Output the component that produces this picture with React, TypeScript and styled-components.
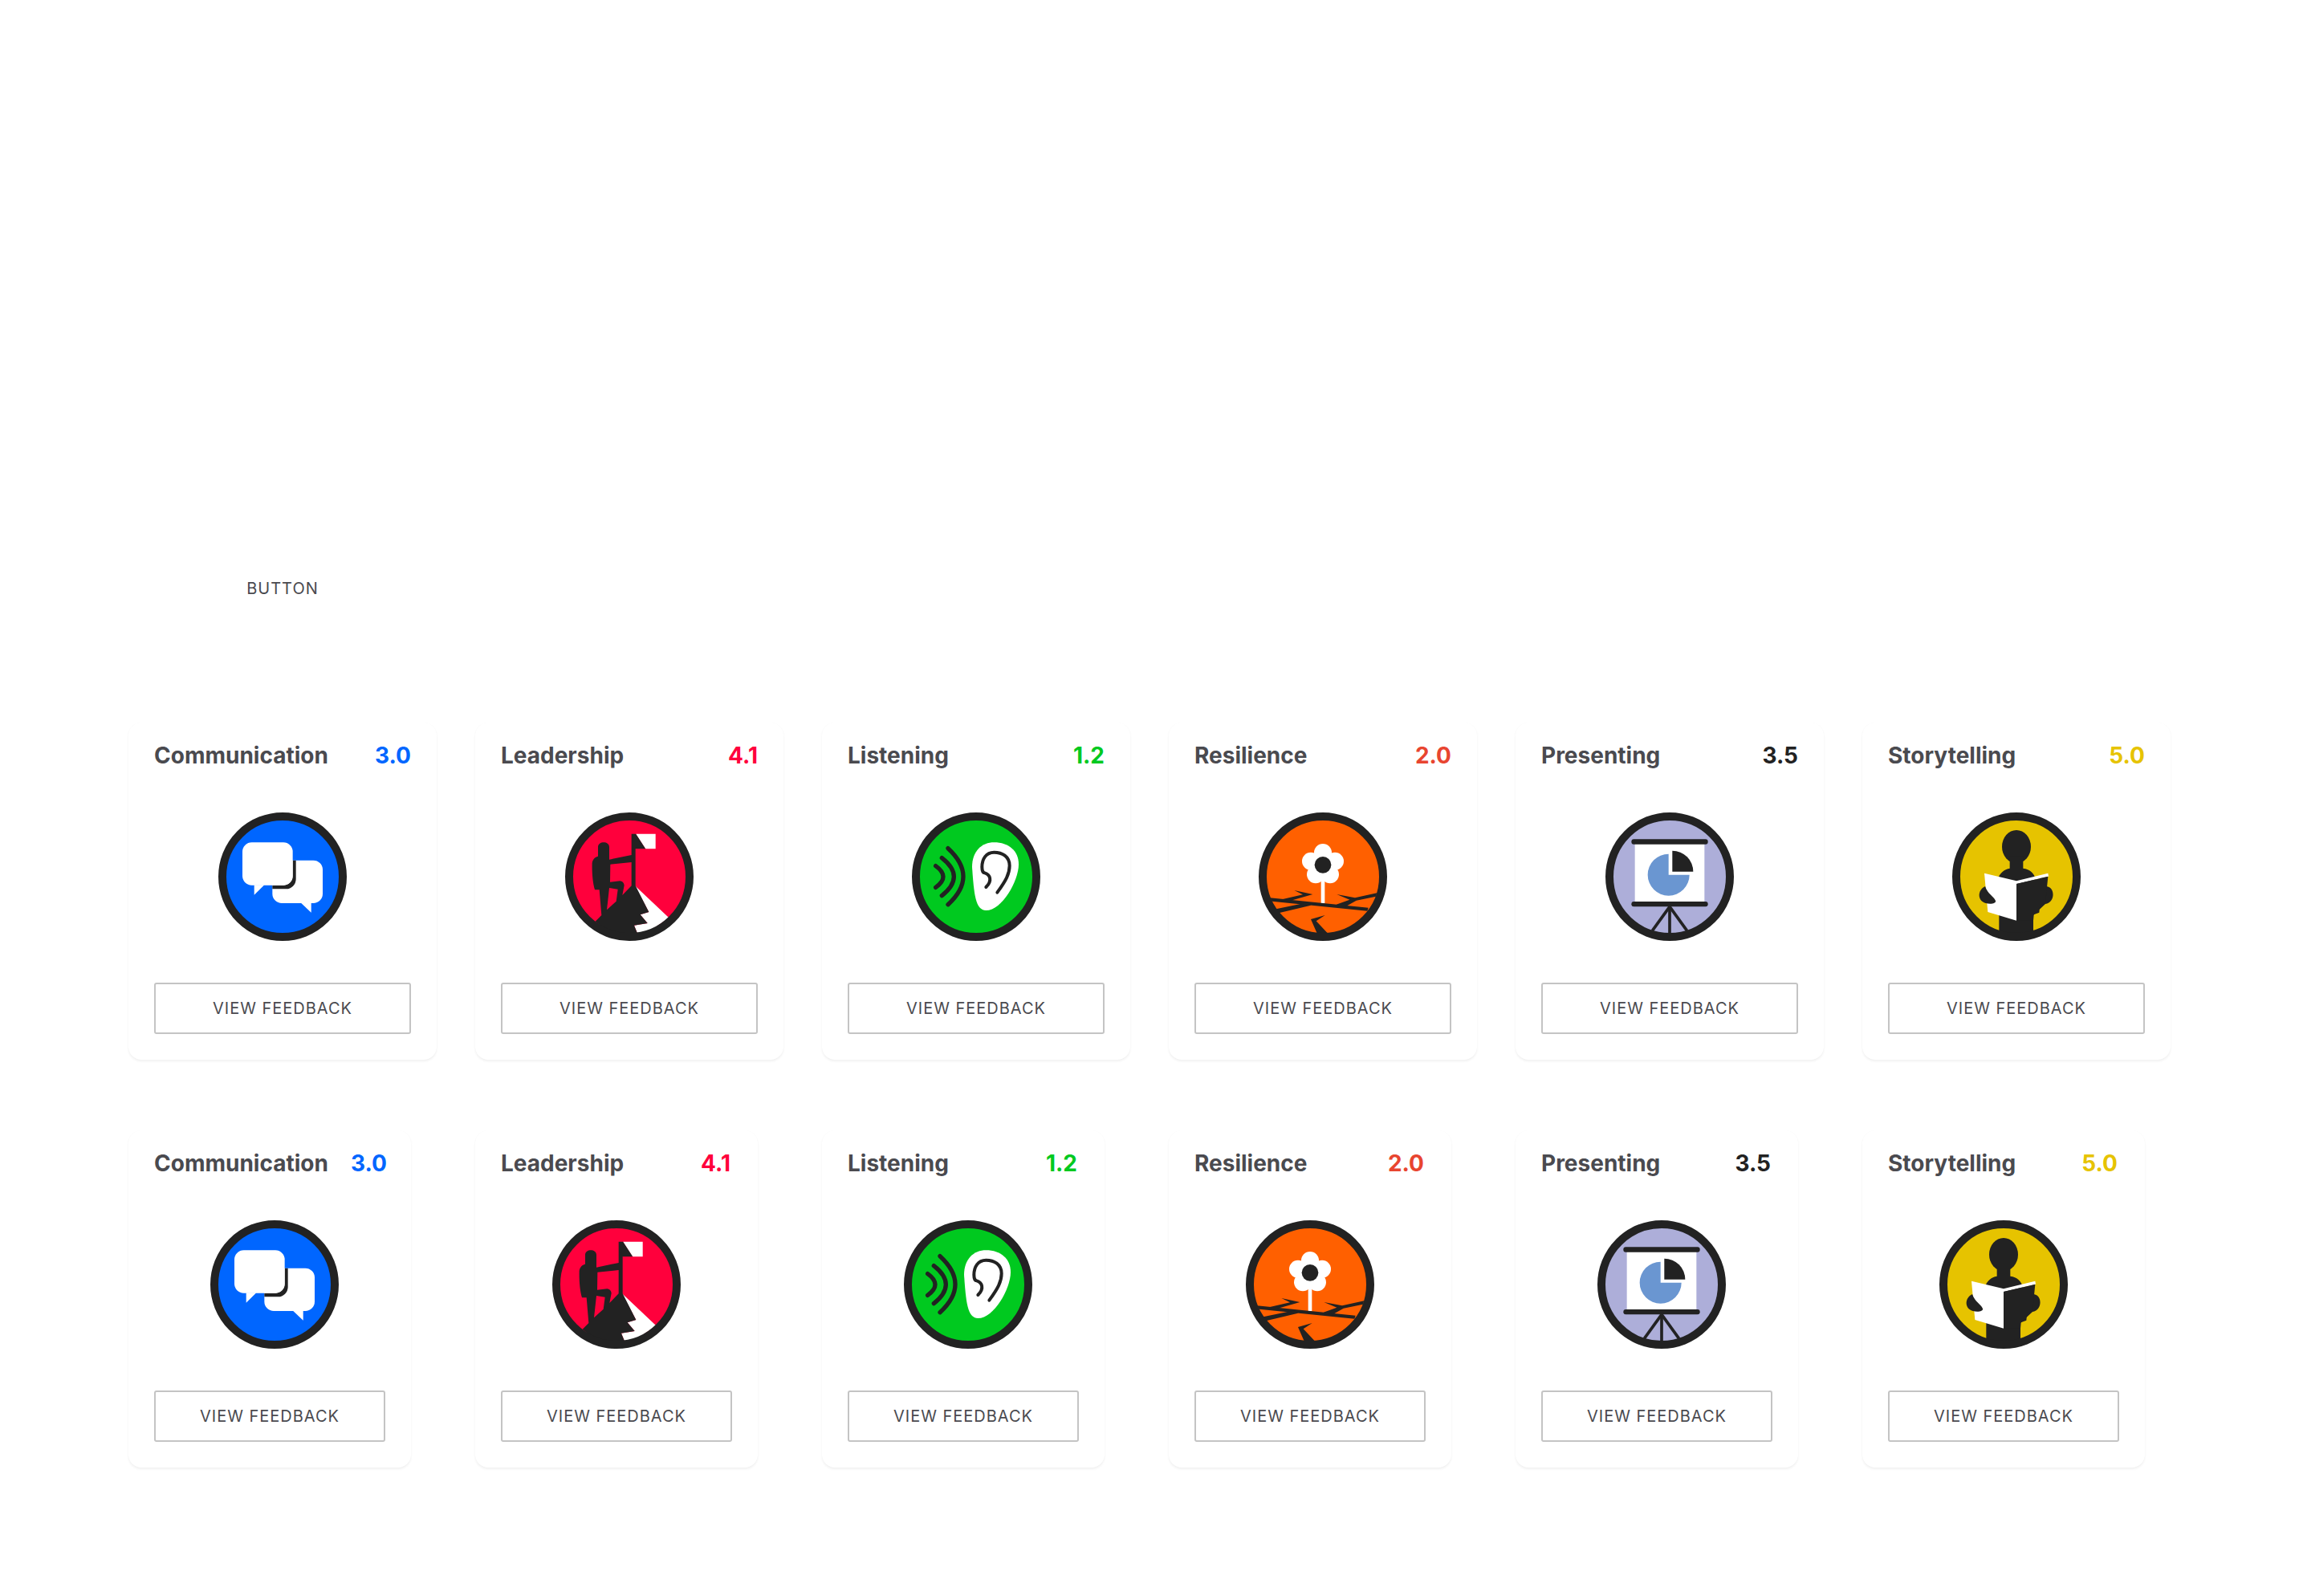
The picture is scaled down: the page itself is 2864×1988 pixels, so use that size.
import React from 'react'
import styled, { createGlobalStyle } from 'styled-components';

const ink = '#222222';

const GlobalStyle = createGlobalStyle`
    html, body {
        margin: 0;
        background: #ffffff;
        font-family: Inter, "Liberation Sans", sans-serif;
    }
`;

const ChatArt = () => (
    <>
        <rect x={238} y={215} width={188} height={160} rx={35} fill="#fff" />
        <path d="M345 374 L383 410 V374 Z" fill="#fff" />
        <path d="M314 215 H326 V285 A37 37 0 0 1 289 322 H238 V308 H280 A34 34 0 0 0 314 274 Z" fill={ink} />
        <rect x={126} y={148} width={188} height={160} rx={35} fill="#fff" />
        <path d="M170 307 V344 L208 307 Z" fill="#fff" />
    </>
);

const ClimberArt = () => (
    <>
        <path d="M288 310 L415 430 L350 475 L298 490 L285 458 L335 450 L308 418 L340 408 Z" fill="#fff" />
        <path d="M140 443 L163 420 L155 325 L138 325 C130 300 127 260 128 225 C130 210 140 202 150 200 V165 C150 142 192 142 192 165 V212 L275 195 V116 H292 L328 172 H290 V310 L340 408 L308 418 L335 450 L285 458 L298 490 L267 500 L200 492 Z" fill={ink} />
        <path d="M192 318 L224 323 L218 368 L183 400 Z" fill="#ff003c" />
        <path d="M196 230 L275 222 V310 L241 345 L248 308 C247 298 240 293 232 292 L195 296 Z" fill="#ff003c" />
        <path d="M292 116 H365 V172 H328 Z" fill="#fff" />
    </>
);

const EarArt = () => (
    <>
        <g fill="none" stroke={ink} strokeWidth={16} strokeLinecap="round">
            <path d="M122 236 Q178 276 122 316" />
            <path d="M145 206 Q235 276 145 347" />
            <path d="M168 170 Q282 275 168 380" />
        </g>
        <path d="M258 240 C258 180 295 148 340 148 C395 148 432 180 432 230 C432 290 370 402 310 402 C270 402 265 340 258 240 Z" fill="#fff" />
        <path d="M352 335 C385 290 398 265 398 235 C398 200 370 185 340 185 C310 185 295 210 295 240 C295 255 300 262 305 262 C325 268 335 290 310 315" fill="none" stroke={ink} strokeWidth={12} strokeLinecap="round" />
    </>
);

const FlowerArt = () => (
    <>
        <rect x={263} y={285} width={14} height={90} fill="#fff" />
        <g fill="#fff">
            <circle cx={270} cy={186} r={33} />
            <circle cx={225} cy={218} r={33} />
            <circle cx={315} cy={218} r={33} />
            <circle cx={243} cy={268} r={33} />
            <circle cx={297} cy={268} r={33} />
            <circle cx={270} cy={232} r={40} />
        </g>
        <circle cx={270} cy={232} r={31} fill={ink} />
        <g fill={ink}>
            <polygon points="72,355 440,392 436,404 80,368" />
            <polygon points="95,397 215,372 225,383 105,412" />
            <polygon points="120,360 195,343 163,327 232,342 135,370" />
            <polygon points="322,342 390,355 472,337 468,350 395,365 355,388 320,380 370,362" />
            <polygon points="225,435 278,420 245,442 290,490 250,492" />
        </g>
    </>
);

const ScreenArt = () => (
    <>
        <rect x={140} y={150} width={260} height={225} fill="#fff" />
        <rect x={127} y={136} width={286} height={19} rx={9} fill={ink} />
        <rect x={127} y={369} width={286} height={19} rx={9} fill={ink} />
        <g stroke={ink} strokeWidth={11}>
            <line x1={270} y1={388} x2={205} y2={478} />
            <line x1={270} y1={388} x2={270} y2={492} />
            <line x1={270} y1={388} x2={335} y2={478} />
        </g>
        <path d="M266 191 V269 H344 A78 78 0 1 1 266 191 Z" fill="#6a96d1" />
        <path d="M280 179 A78 78 0 0 1 358 257 H280 Z" fill={ink} />
    </>
);

const ReaderArt = () => (
    <>
        <ellipse cx={270} cy={164} rx={54} ry={62} fill={ink} />
        <path d="M245 200 H295 V245 C320 248 338 262 342 290 L385 313 C415 318 415 372 378 378 L333 420 V500 H205 V400 L200 290 C205 262 225 248 245 245 Z" fill={ink} />
        <polygon points="150,263 270,292 270,440 163,408" fill="#fff" />
        <path d="M153 312 C125 325 122 365 155 375 C170 379 195 378 192 366 C186 350 162 340 153 312 Z" fill={ink} />
        <polygon points="270,292 388,263 390,275 270,303" fill="#fff" />
        <polygon points="270,303 388,275 378,378 358,380 355,410 335,418 333,440 270,440" fill={ink} />
    </>
);

type Skill = {
    name: string;
    score: string;
    scoreColor: string;
    fill: string;
    originX: number;
    // these badges sit a little right of centre in the narrow row
    nudged?: boolean;
    art: React.ReactNode;
}

const skills: Skill[] = [
    { name: 'Communication', score: '3.0', scoreColor: '#0066ff', fill: '#0066ff', originX: 36, nudged: true, art: <ChatArt /> },
    { name: 'Leadership', score: '4.1', scoreColor: '#ff003c', fill: '#ff003c', originX: 27, art: <ClimberArt /> },
    { name: 'Listening', score: '1.2', scoreColor: '#00c91f', fill: '#00c91f', originX: 33, nudged: true, art: <EarArt /> },
    { name: 'Resilience', score: '2.0', scoreColor: '#e84530', fill: '#ff6000', originX: 30, art: <FlowerArt /> },
    { name: 'Presenting', score: '3.5', scoreColor: '#222222', fill: '#adaed9', originX: 30, nudged: true, art: <ScreenArt /> },
    { name: 'Storytelling', score: '5.0', scoreColor: '#e6c300', fill: '#e6c300', originX: 30, art: <ReaderArt /> },
];

const Badge: React.FC<{ skill: Skill; nudge?: boolean }> = ({ skill, nudge }) => {
    const cx = skill.originX + 240;
    return (
        <BadgeSvg $nudge={nudge} viewBox={`${skill.originX} 36 480 480`}>
            <circle cx={cx} cy={276} r={225} fill={skill.fill} />
            {skill.art}
            <circle cx={cx} cy={276} r={225} fill="none" stroke={ink} strokeWidth={30} />
        </BadgeSvg>
    );
}

const SkillCard: React.FC<{ skill: Skill; wide?: boolean }> = ({ skill, wide }) => (
    <Card $wide={wide}>
        <CardHeader $wide={wide}>
            <SkillName>{skill.name}</SkillName>
            <Score $color={skill.scoreColor}>{skill.score}</Score>
        </CardHeader>
        <Badge skill={skill} nudge={!wide && skill.nudged} />
        <FeedbackButton>VIEW FEEDBACK</FeedbackButton>
    </Card>
);

export default function App() {
    return (
        <Page>
            <GlobalStyle />
            <GhostButton>BUTTON</GhostButton>
            <WideRow>
                {skills.map(s => <SkillCard key={s.name} skill={s} wide />)}
            </WideRow>
            <NarrowRow>
                {skills.map(s => <SkillCard key={s.name} skill={s} />)}
            </NarrowRow>
        </Page>
    )
}

const Page = styled.div`
    box-sizing: border-box;
    width: 2864px;
    height: 1988px;
    padding: 701px 160px 0;
    background: #ffffff;
`;

const GhostButton = styled.button`
    display: block;
    width: 384px;
    height: 64px;
    padding: 0;
    border: 0;
    background: transparent;
    font-family: Inter, "Liberation Sans", sans-serif;
    font-size: 20px;
    letter-spacing: 1px;
    color: #4a4a4f;
`;

const WideRow = styled.div`
    display: flex;
    gap: 48px;
    margin-top: 135px;
`;

const NarrowRow = styled.div`
    display: flex;
    gap: 80px;
    margin-top: 88px;
`;

const Card = styled.div<{ $wide?: boolean }>`
    box-sizing: border-box;
    flex: none;
    width: ${({ $wide }) => $wide ? 384 : 352}px;
    height: 420px;
    padding: 24px 32px 32px;
    display: flex;
    flex-direction: column;
    align-items: center;
    border-radius: 16px;
    background: #ffffff;
    box-shadow: 0 2px 3px rgba(0, 0, 0, .06), 0 0 1px rgba(0, 0, 0, .03);
`;

const CardHeader = styled.div<{ $wide?: boolean }>`
    align-self: stretch;
    display: flex;
    justify-content: space-between;
    gap: 28px;
    margin-bottom: 52px;
    padding-bottom: 1px;
    padding-right: ${({ $wide }) => $wide ? 0 : 2}px;
    font-size: 28px;
    line-height: 35px;
    font-weight: 700;
    white-space: nowrap;
`;

const SkillName = styled.span`
    flex: none;
    color: #4a4a4f;
`;

const Score = styled.span<{ $color: string }>`
    flex: none;
    color: ${({ $color }) => $color};
`;

const BadgeSvg = styled.svg<{ $nudge?: boolean }>`
    display: block;
    flex: none;
    width: 160px;
    height: 160px;
    margin-bottom: 52px;
    margin-left: ${({ $nudge }) => $nudge ? 11 : 0}px;
`;

const FeedbackButton = styled.button`
    box-sizing: border-box;
    align-self: stretch;
    height: 64px;
    padding: 0;
    border: 2px solid #c4c4c4;
    border-radius: 3px;
    background: #ffffff;
    font-family: Inter, "Liberation Sans", sans-serif;
    font-size: 20px;
    letter-spacing: 1px;
    color: #4a4a4f;
`;
